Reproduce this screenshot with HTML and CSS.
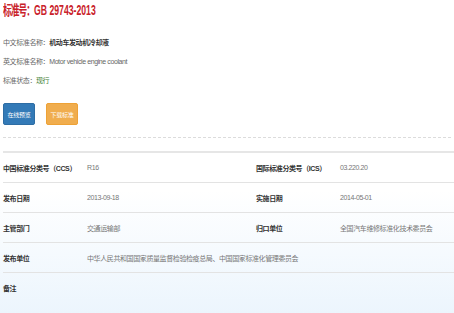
FILE: index.html
```html
<!DOCTYPE html>
<html lang="zh-CN">
<head>
    <meta charset="UTF-8">
    <meta name="viewport" content="width=device-width, initial-scale=1.0">
    <title>GB 29743-2013</title>
    <link rel="stylesheet" href="styles.css">
</head>
<body>
    <h1 class="std-title"><span class="std-title-cn">标准号：</span>GB 29743-2013</h1>

    <div class="std-info">
        <p>中文标准名称：<strong>机动车发动机冷却液</strong></p>
        <p>英文标准名称：Motor vehicle engine coolant</p>
        <p>标准状态：<span class="status">现行</span></p>
    </div>

    <div class="actions">
        <button class="btn btn-preview">在线预览</button>
        <button class="btn btn-download">下载标准</button>
    </div>

    <div class="divider"></div>

    <table class="detail">
        <colgroup>
            <col class="col-label">
            <col class="col-value">
            <col class="col-label">
            <col>
        </colgroup>
        <tr>
            <th>中国标准分类号（CCS）</th>
            <td>R16</td>
            <th>国际标准分类号（ICS）</th>
            <td>03.220.20</td>
        </tr>
        <tr>
            <th>发布日期</th>
            <td>2013-09-18</td>
            <th>实施日期</th>
            <td>2014-05-01</td>
        </tr>
        <tr>
            <th>主管部门</th>
            <td>交通运输部</td>
            <th>归口单位</th>
            <td>全国汽车维修标准化技术委员会</td>
        </tr>
        <tr>
            <th>发布单位</th>
            <td colspan="3">中华人民共和国国家质量监督检验检疫总局、中国国家标准化管理委员会</td>
        </tr>
        <tr class="last">
            <th>备注</th>
            <td colspan="3"></td>
        </tr>
    </table>
</body>
</html>
```

FILE: styles.css
```css
/* Page */
html, body {
    margin: 0;
    padding: 0;
}

body {
    min-height: 100vh;
    padding: 0 0 0 3px;
    box-sizing: border-box;
    font-family: "Liberation Sans", "Noto Sans CJK SC", sans-serif;
    font-size: 7px;
    letter-spacing: -0.4px;
    color: #666;
    background: linear-gradient(to bottom, #fff 190px, #ecf5fd 313px);
    overflow: hidden;
}

/* Title */
.std-title {
    margin: 0;
    height: 20px;
    line-height: 20px;
    font-size: 14px;
    font-weight: bold;
    letter-spacing: 0;
    color: #c9222a;
    white-space: nowrap;
    transform: scaleX(0.62);
    transform-origin: 0 50%;
}

.std-title-cn {
    letter-spacing: -1.5px;
}

/* Basic info */
.std-info {
    margin-top: 13px;
}

.std-info p {
    margin: 0;
    line-height: 19px;
}

.std-info strong {
    color: #333;
}

.status {
    color: #3a7a2e;
}

/* Buttons */
.actions {
    display: flex;
    gap: 11px;
    margin-top: 13px;
}

.btn {
    width: 32px;
    height: 22px;
    padding: 0;
    border: 1px solid transparent;
    border-radius: 2px;
    font-family: inherit;
    font-size: 6px;
    letter-spacing: -0.2px;
    color: #fff;
    cursor: pointer;
}

.btn-preview {
    background-color: #337ab7;
    border-color: #2e6da4;
}

.btn-download {
    background-color: #f0ad4e;
    border-color: #eea236;
}

.divider {
    margin: 12px 3px 0 0;
    border-top: 1px dashed #dcdcdc;
}

/* Detail table */
.detail {
    width: 100%;
    margin-top: 13px;
    border-collapse: collapse;
    border-top: 2px solid #e6e6e6;
}

.col-label {
    width: 84px;
}

.col-value {
    width: 169px;
}

.detail th,
.detail td {
    height: 29px;
    padding: 0;
    text-align: left;
    vertical-align: middle;
    border-bottom: 1px solid #e3e3e3;
    white-space: nowrap;
}

.detail th {
    color: #333;
    font-weight: bold;
}

.detail td {
    color: #777;
}

.detail .last th,
.detail .last td {
    border-bottom: none;
}
```
